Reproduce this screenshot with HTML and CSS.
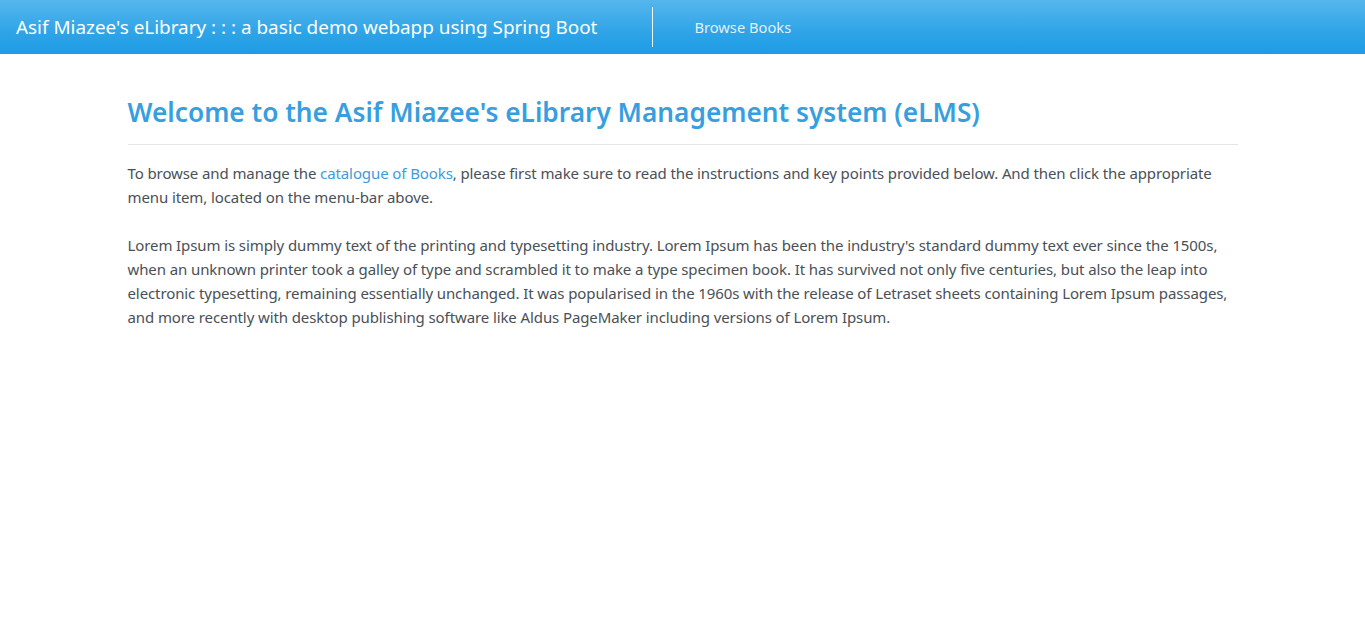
FILE: index.html
```html
<!DOCTYPE html>
<html lang="en">
<head>
<meta charset="utf-8">
<title>Asif Miazee's eLibrary</title>
<link rel="stylesheet" href="styles.css">
</head>
<body>
<nav class="navbar">
  <a class="brand" href="#">Asif Miazee's eLibrary : : : a basic demo webapp using Spring Boot</a>
  <span class="divider"></span>
  <ul class="nav">
    <li><a class="nav-link" href="#">Browse Books</a></li>
  </ul>
</nav>
<main class="container">
  <h1 class="title">Welcome to the Asif Miazee's eLibrary Management system (eLMS)</h1>
  <hr class="rule">
  <p class="text">To browse and manage the <a class="link" href="#">catalogue of Books</a>, please first make sure to read the instructions and key points provided below. And then click the appropriate menu item, located on the menu-bar above.</p>
  <p class="text">Lorem Ipsum is simply dummy text of the printing and typesetting industry. Lorem Ipsum has been the industry's standard dummy text ever since the 1500s, when an unknown printer took a galley of type and scrambled it to make a type specimen book. It has survived not only five centuries, but also the leap into electronic typesetting, remaining essentially unchanged. It was popularised in the 1960s with the release of Letraset sheets containing Lorem Ipsum passages, and more recently with desktop publishing software like Aldus PageMaker including versions of Lorem Ipsum.</p>
</main>
</body>
</html>
```

FILE: styles.css
```css
* { box-sizing: border-box; }
html, body { margin: 0; padding: 0; background: #fff; }
body {
  font-family: "Noto Sans", "Open Sans", sans-serif;
  font-size: 15px;
  line-height: 24px;
  color: #495057;
}
.navbar {
  height: 54px;
  display: flex;
  align-items: center;
  padding: 0 16px;
  background: linear-gradient(to bottom, #55b6ec 0%, #2fa4e7 60%, #1d9ce5 100%);
}
.brand {
  color: #fff;
  text-decoration: none;
  font-size: 18.9px;
  line-height: 30px;
  white-space: nowrap;
}
.divider {
  width: 1px;
  height: 40px;
  background: rgba(255,255,255,0.9);
  margin-left: 55px;
}
.nav { list-style: none; margin: 0 0 0 41px; padding: 0; display: flex; }
.nav-link {
  color: rgba(255,255,255,0.85);
  text-decoration: none;
  font-size: 14.7px;
}
.container {
  width: 1110px;
  margin: 0 auto;
  padding-top: 40px;
}
.title {
  margin: 0;
  font-size: 26.25px;
  line-height: 36px;
  font-weight: 600;
  color: #379fdf;
}
.rule {
  border: 0;
  border-top: 1px solid #e5e5e5;
  margin: 14px 0 16px;
}
.text { margin: 0 0 24px; letter-spacing: -0.1px; }
.link { color: #3d9bdb; text-decoration: none; }
```
